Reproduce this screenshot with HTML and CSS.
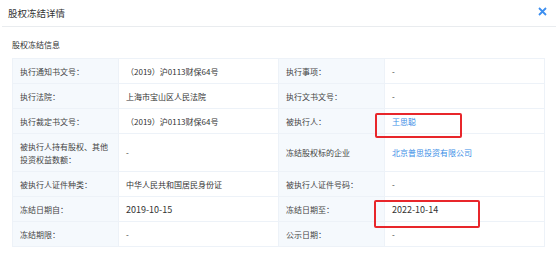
FILE: index.html
```html
<!DOCTYPE html>
<html lang="zh-CN">

<head>
    <meta charset="UTF-8">
    <meta name="viewport" content="width=device-width, initial-scale=1.0">
    <title>股权冻结详情</title>
    <link rel="stylesheet" href="styles.css">
</head>

<body>
    <!-- 弹窗头部 -->
    <div class="modal-head">
        <span class="modal-title">股权冻结详情</span>
        <span class="close-btn">
            <svg width="9" height="9" viewBox="0 0 9 9">
                <path d="M1 1L8 8M8 1L1 8" stroke="#3d8ff0" stroke-width="1.8" fill="none" />
            </svg>
        </span>
    </div>

    <div class="modal-body">
        <div class="sub-title">股权冻结信息</div>

        <div class="table-wrap">
            <table class="info-table">
                <tr>
                    <td class="label">执行通知书文号：</td>
                    <td class="value">（2019）沪0113财保64号</td>
                    <td class="label">执行事项：</td>
                    <td class="value">-</td>
                </tr>
                <tr>
                    <td class="label">执行法院：</td>
                    <td class="value">上海市宝山区人民法院</td>
                    <td class="label">执行文书文号：</td>
                    <td class="value">-</td>
                </tr>
                <tr>
                    <td class="label">执行裁定书文号：</td>
                    <td class="value">（2019）沪0113财保64号</td>
                    <td class="label">被执行人：</td>
                    <td class="value"><a class="link">王思聪</a></td>
                </tr>
                <tr class="tall">
                    <td class="label nowrap">被执行人持有股权、其他<br>投资权益数额：</td>
                    <td class="value">-</td>
                    <td class="label">冻结股权标的企业</td>
                    <td class="value"><a class="link">北京普思投资有限公司</a></td>
                </tr>
                <tr>
                    <td class="label">被执行人证件种类：</td>
                    <td class="value">中华人民共和国居民身份证</td>
                    <td class="label">被执行人证件号码：</td>
                    <td class="value">-</td>
                </tr>
                <tr>
                    <td class="label">冻结日期自：</td>
                    <td class="value date">2019-10-15</td>
                    <td class="label">冻结日期至：</td>
                    <td class="value date">2022-10-14</td>
                </tr>
                <tr>
                    <td class="label">冻结期限：</td>
                    <td class="value">-</td>
                    <td class="label">公示日期：</td>
                    <td class="value">-</td>
                </tr>
            </table>

            <!-- 红框标注 -->
            <div class="mark mark-person"></div>
            <div class="mark mark-date"></div>
        </div>
    </div>
</body>

</html>
```

FILE: styles.css
```css
/* 页面基础 */
body {
    margin: 0;
    padding: 0;
    background: #fff;
    font-family: "Microsoft YaHei", "Noto Sans CJK SC", sans-serif;
    color: #444;
}

/* 弹窗头部 */
.modal-head {
    height: 26px;
    margin: 0 2px;
    border-bottom: 1px solid #e9ecef;
    display: flex;
    align-items: center;
    justify-content: space-between;
    padding: 0 9px 0 6px;
}

.modal-title {
    font-size: 9.5px;
    color: #333;
}

.close-btn {
    display: flex;
    align-items: center;
    margin-top: -3px;
}

.modal-body {
    padding: 0 13px 0 12px;
}

.sub-title {
    font-size: 8px;
    color: #333;
    height: 31px;
    line-height: 36px;
}

.table-wrap {
    position: relative;
}

/* 信息表格 */
.info-table {
    width: 533px;
    border-collapse: collapse;
    table-layout: fixed;
    font-size: 8px;
}

.info-table td {
    border: 1px solid #edf2f8;
    height: 24px;
    padding: 0 7px;
    vertical-align: middle;
    line-height: 13px;
}

.info-table tr.tall td {
    height: 37px;
}

.info-table td:nth-child(1),
.info-table td:nth-child(3) {
    width: 91px;
}

.info-table td:nth-child(2),
.info-table td:nth-child(4) {
    width: 145px;
}

.label {
    background: #f5f9fd;
    color: #444;
    padding-left: 8px;
}

.nowrap {
    white-space: nowrap;
}

.value {
    background: #fff;
    color: #333;
}

.date {
    font-size: 9px;
}

.link {
    color: #3a8ee6;
    cursor: pointer;
}

/* 红框 */
.mark {
    position: absolute;
    border: 2px solid #e8262b;
    border-radius: 2px;
}

.mark-person {
    left: 363px;
    top: 55px;
    width: 83px;
    height: 21px;
}

.mark-date {
    left: 362px;
    top: 142px;
    width: 102px;
    height: 24px;
}
```
